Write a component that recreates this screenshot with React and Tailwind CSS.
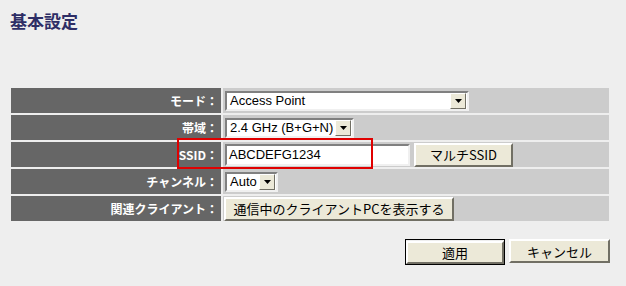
import React from "react";

const jp = { fontFamily: '"Noto Sans CJK JP", "Liberation Sans", sans-serif' };
const ar = { fontFamily: '"Liberation Sans", "Noto Sans CJK JP", sans-serif' };

const Arrow = () => (
  <div className="w-[16px] h-[16px] bg-[#ece9d8] border border-t-white border-l-white border-b-[#716f64] border-r-[#716f64] flex items-center justify-center">
    <svg width="7" height="4" viewBox="0 0 7 4">
      <path d="M0 0h7L3.5 4z" fill="#000" />
    </svg>
  </div>
);

const Select = ({ value, width }) => (
  <div
    className={`${width} h-[20px] bg-white border-2 border-t-[#808080] border-l-[#808080] border-b-[#f0f0f0] border-r-[#f0f0f0] flex items-center justify-between pl-[3px] pr-[1px]`}
  >
    <span className="text-[13px] text-black leading-none" style={ar}>{value}</span>
    <Arrow />
  </div>
);

const Btn = ({ children, className = "" }) => (
  <button
    className={`h-[23px] bg-[#ece9d8] border-2 border-t-white border-l-white border-b-[#716f64] border-r-[#716f64] text-[13px] text-black leading-none ${className}`}
    style={jp}
  >
    {children}
  </button>
);

const Row = ({ label, children }) => (
  <div className="flex gap-[2px] h-[25px]">
    <div className="w-[210px] bg-[#666666] flex items-center justify-end pr-[3px]">
      <span className="text-white text-[12px] font-bold leading-none" style={jp}>{label}</span>
    </div>
    <div className="flex-1 bg-[#cccccc] flex items-center pl-[2px] gap-[4px]">{children}</div>
  </div>
);

export default function App() {
  return (
    <div className="w-[626px] h-[286px] bg-[#eeeeee] relative overflow-hidden">
      <h1 className="pt-[12px] pl-[10px] text-[17px] font-bold text-[#2e2e66] leading-[18px]" style={jp}>
        基本設定
      </h1>

      <div className="mt-[58px] ml-[11px] w-[598px] flex flex-col gap-[2px]">
        <Row label="モード：">
          <Select value="Access Point" width="w-[244px]" />
        </Row>
        <Row label="帯域：">
          <Select value="2.4 GHz (B+G+N)" width="w-[129px]" />
        </Row>
        <Row label="SSID：">
          <div className="w-[185px] h-[22px] bg-white border-2 border-t-[#808080] border-l-[#808080] border-b-[#f0f0f0] border-r-[#f0f0f0] flex items-center pl-[2px]">
            <span className="text-[13px] text-black leading-none" style={ar}>ABCDEFG1234</span>
          </div>
          <Btn className="w-[99px] h-[24px]">マルチSSID</Btn>
        </Row>
        <Row label="チャンネル：">
          <Select value="Auto" width="w-[53px]" />
        </Row>
        <Row label="関連クライアント：">
          <Btn className="w-[230px] h-[24px] ml-[-1px]">通信中のクライアントPCを表示する</Btn>
        </Row>
      </div>

      {/* highlight around SSID */}
      <div className="absolute left-[177px] top-[138px] w-[196px] h-[31px] border-2 border-[#e00000] pointer-events-none" />

      <div className="flex justify-end gap-[4px] mt-[18px] pr-[16px]">
        <div className="border border-black">
          <Btn className="w-[98px] h-[23px]">適用</Btn>
        </div>
        <Btn className="w-[101px] h-[24px]">キャンセル</Btn>
      </div>
    </div>
  );
}
